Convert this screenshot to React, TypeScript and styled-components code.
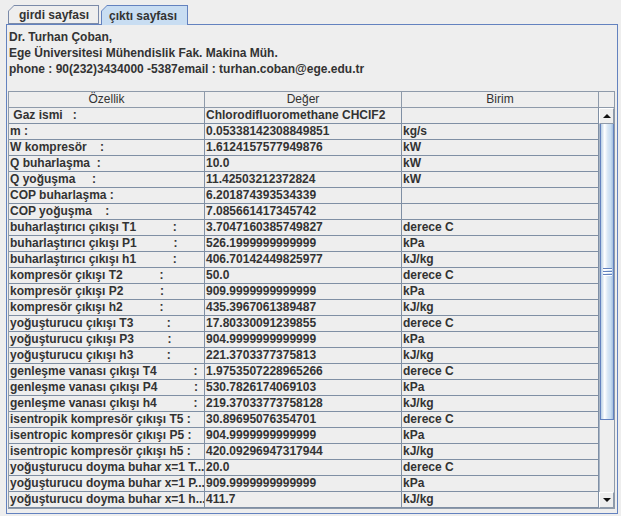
import React from "react";
import styled, { createGlobalStyle } from "styled-components";

const GlobalStyle = createGlobalStyle`
  html, body {
    margin: 0;
    padding: 0;
    background: #eeeeee;
  }
`;

const Frame = styled.div`
  width: 621px;
  height: 516px;
  background: #eeeeee;
  font-family: "Liberation Sans", Arial, sans-serif;
  font-size: 12px;
  color: #333333;
  overflow: hidden;
`;

const TabStrip = styled.div`
  display: flex;
  align-items: flex-start;
  gap: 2px;
  height: 24px;
  padding: 5px 0 0 8px;
  box-sizing: border-box;
  position: relative;
  z-index: 1;
`;

const Tab = styled.div<{ $active?: boolean; $width: number }>`
  width: ${(p) => p.$width}px;
  height: ${(p) => (p.$active ? 20 : 19)}px;
  padding: 1px 1px ${(p) => (p.$active ? 0 : 1)}px 1px;
  box-sizing: border-box;
  background: ${(p) => (p.$active ? "#6382bf" : "#7a8aa9")};
  clip-path: polygon(6px 0, 100% 0, 100% 100%, 0 100%, 0 6px);
`;

const TabFace = styled.div<{ $active?: boolean }>`
  height: 100%;
  display: flex;
  align-items: center;
  padding-left: ${(p) => (p.$active ? 7 : 10)}px;
  font-weight: bold;
  background: ${(p) => (p.$active ? "#c8ddf2" : "#eeeeee")};
  clip-path: polygon(5px 0, 100% 0, 100% 100%, 0 100%, 0 5px);
`;

const Panel = styled.div`
  margin-left: 6px;
  width: 612px;
  height: 490px;
  box-sizing: border-box;
  border: 1px solid #6382bf;
  padding: 4px 1px 0 1px;
`;

const Info = styled.div`
  padding-left: 1px;
  font-weight: bold;
  line-height: 16px;
`;

const ScrollPane = styled.div`
  margin-top: 14px;
  width: 607px;
  box-sizing: border-box;
  border: 1px solid #8e9aaa;
`;

const HeaderRow = styled.div`
  display: grid;
  grid-template-columns: 196px 197px 197px 15px;
`;

const HeaderCell = styled.div`
  height: 16px;
  box-sizing: border-box;
  border-right: 1px solid #8e9aaa;
  border-bottom: 1px solid #8e9aaa;
  text-align: center;
  line-height: 15px;
  background: #eeeeee;
  &:last-child {
    border-right: none;
  }
`;

const Body = styled.div`
  display: flex;
`;

const Rows = styled.div`
  width: 590px;
`;

const Row = styled.div`
  display: grid;
  grid-template-columns: 196px 197px 197px;
`;

const Cell = styled.div`
  height: 16px;
  box-sizing: border-box;
  border-right: 1px solid #7f8fa4;
  border-bottom: 1px solid #7f8fa4;
  padding-left: 1px;
  font-weight: bold;
  line-height: 15px;
  white-space: pre;
  overflow: hidden;
`;

const ScrollBar = styled.div`
  width: 15px;
  height: 400px;
  display: flex;
  flex-direction: column;
  background: #eeeeee;
`;

const ArrowButton = styled.div`
  height: 16px;
  box-sizing: border-box;
  border: 1px solid #8e9aaa;
  border-top-color: #ffffff;
  border-left-color: #ffffff;
  display: flex;
  align-items: center;
  justify-content: center;
  background: #eeeeee;
`;

const Arrow = styled.div<{ $down?: boolean }>`
  width: 0;
  height: 0;
  border-left: 4px solid transparent;
  border-right: 4px solid transparent;
  ${(p) =>
    p.$down ? "border-top: 4px solid #111;" : "border-bottom: 4px solid #111;"}
`;

const Track = styled.div`
  flex: 1;
  box-sizing: border-box;
  border-left: 1px solid #a9b6c6;
`;

const Thumb = styled.div`
  height: 296px;
  box-sizing: border-box;
  border-left: 1px solid #6382bf;
  border-right: 1px solid #6382bf;
  border-bottom: 1px solid #6382bf;
  background: linear-gradient(
    to right,
    #b8cfe5 0%,
    #ffffff 30%,
    #dbe8f5 55%,
    #c8ddf2 80%,
    #a3bfdf 100%
  );
  display: flex;
  align-items: center;
  justify-content: center;
`;

const Grip = styled.div`
  width: 9px;
  height: 8px;
  background: repeating-linear-gradient(
    to bottom,
    #6382bf 0 1px,
    #ffffff 1px 2px,
    transparent 2px 3px
  );
`;

const rows: [string, string, string][] = [
  [" Gaz ismi   :", "Chlorodifluoromethane CHClF2", ""],
  ["m :", "0.05338142308849851", "kg/s"],
  ["W kompresör    :", "1.6124157577949876", "kW"],
  ["Q buharlaşma  :", "10.0", "kW"],
  ["Q yoğuşma     :", "11.42503212372824", "kW"],
  ["COP buharlaşma :", "6.201874393534339", ""],
  ["COP yoğuşma    :", "7.085661417345742", ""],
  ["buharlaştırıcı çıkışı T1           :", "3.7047160385749827", "derece C"],
  ["buharlaştırıcı çıkışı P1           :", "526.1999999999999", "kPa"],
  ["buharlaştırıcı çıkışı h1           :", "406.70142449825977", "kJ/kg"],
  ["kompresör çıkışı T2           :", "50.0", "derece C"],
  ["kompresör çıkışı P2           :", "909.9999999999999", "kPa"],
  ["kompresör çıkışı h2           :", "435.3967061389487", "kJ/kg"],
  ["yoğuşturucu çıkışı T3          :", "17.80330091239855", "derece C"],
  ["yoğuşturucu çıkışı P3          :", "904.9999999999999", "kPa"],
  ["yoğuşturucu çıkışı h3          :", "221.3703377375813", "kJ/kg"],
  ["genleşme vanası çıkışı T4           :", "1.9753507228965266", "derece C"],
  ["genleşme vanası çıkışı P4           :", "530.7826174069103", "kPa"],
  ["genleşme vanası çıkışı h4           :", "219.37033773758128", "kJ/kg"],
  ["isentropik kompresör çıkışı T5 :", "30.89695076354701", "derece C"],
  ["isentropic kompresör çıkışı P5 :", "904.9999999999999", "kPa"],
  ["isentropic kompresör çıkışı h5 :", "420.09296947317944", "kJ/kg"],
  ["yoğuşturucu doyma buhar x=1 T...", "20.0", "derece C"],
  ["yoğuşturucu doyma buhar x=1 P...", "909.9999999999999", "kPa"],
  ["yoğuşturucu doyma buhar x=1 h...", "411.7", "kJ/kg"],
];

const App: React.FC = () => {
  return (
    <>
      <GlobalStyle />
      <Frame>
        <TabStrip>
          <Tab $width={91}>
            <TabFace>girdi sayfası</TabFace>
          </Tab>
          <Tab $active $width={87}>
            <TabFace $active>çıktı sayfası</TabFace>
          </Tab>
        </TabStrip>
        <Panel>
          <Info>
            <div>Dr. Turhan Çoban,</div>
            <div>Ege Üniversitesi Mühendislik Fak. Makina Müh.</div>
            <div>phone : 90(232)3434000 -5387email : turhan.coban@ege.edu.tr</div>
          </Info>
          <ScrollPane>
            <HeaderRow>
              <HeaderCell>Özellik</HeaderCell>
              <HeaderCell>Değer</HeaderCell>
              <HeaderCell>Birim</HeaderCell>
              <HeaderCell />
            </HeaderRow>
            <Body>
              <Rows>
                {rows.map(([label, value, unit], i) => (
                  <Row key={i}>
                    <Cell>{label}</Cell>
                    <Cell>{value}</Cell>
                    <Cell>{unit}</Cell>
                  </Row>
                ))}
              </Rows>
              <ScrollBar>
                <ArrowButton>
                  <Arrow />
                </ArrowButton>
                <Track>
                  <Thumb>
                    <Grip />
                  </Thumb>
                </Track>
                <ArrowButton>
                  <Arrow $down />
                </ArrowButton>
              </ScrollBar>
            </Body>
          </ScrollPane>
        </Panel>
      </Frame>
    </>
  );
};

export default App;
